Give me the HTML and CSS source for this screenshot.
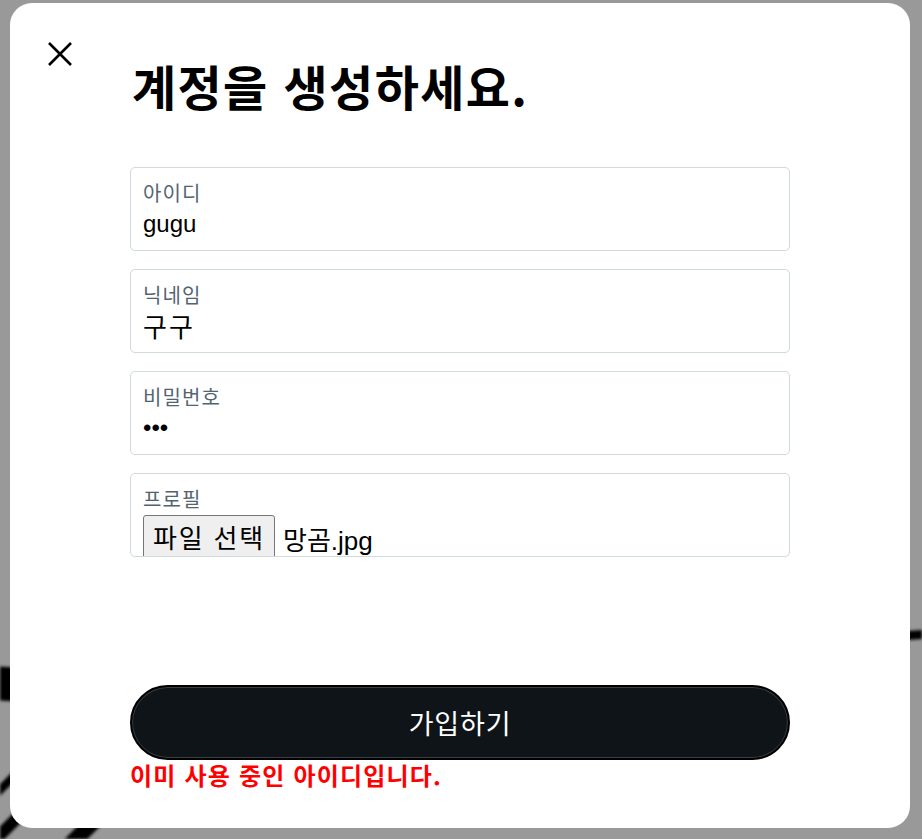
FILE: index.html
```html
<!doctype html>
<html lang="ko">

<head>
  <meta charset="utf-8">
  <title>계정 생성</title>
  <link rel="stylesheet" href="styles.css">
</head>

<body>
  <svg class="backdrop-art" width="922" height="839" viewBox="0 0 922 839">
    <path d="M-10 666 L25 668 L25 702 L-10 700 Z" fill="#000" />
    <path d="M-20 810 L40 750" stroke="#000" stroke-width="8" />
    <path d="M-10 845 L40 795" stroke="#000" stroke-width="12" />
    <path d="M70 845 L95 820" stroke="#000" stroke-width="16" />
    <path d="M900 636 L930 634" stroke="#000" stroke-width="9" />
  </svg>
  <div class="overlay"></div>

  <div class="modal">
    <button class="close" aria-label="닫기">
      <svg width="24" height="24" viewBox="0 0 24 24">
        <path d="M1 1 L23 23 M23 1 L1 23" stroke="#000" stroke-width="2.6" fill="none" />
      </svg>
    </button>

    <div class="content">
      <h1>계정을 생성하세요.</h1>

      <form class="form">
        <label class="field">
          <span class="label">아이디</span>
          <input class="value" type="text" value="gugu">
        </label>
        <label class="field">
          <span class="label">닉네임</span>
          <input class="value value-ko" type="text" value="구구">
        </label>
        <label class="field">
          <span class="label">비밀번호</span>
          <input class="value" type="password" value="abc">
        </label>
        <div class="field">
          <span class="label">프로필</span>
          <div class="file">
            <span class="file-btn">파일 선택</span>
            <span class="file-name">망곰.jpg</span>
          </div>
        </div>

        <button class="submit" type="button">가입하기</button>
        <p class="error">이미 사용 중인 아이디입니다.</p>
      </form>
    </div>
  </div>
</body>

</html>
```

FILE: styles.css
```css
html, body { margin:0; height:100%; }
body { background-color:#fff; font-family:"Liberation Sans","Noto Sans CJK KR",sans-serif; overflow:hidden; position:relative; }

.backdrop-art { position:absolute; left:0; top:0; filter:blur(1.5px); }
.overlay { position:absolute; inset:0; background-color:rgba(0,0,0,0.4); }

.modal { position:relative; box-sizing:border-box; width:900px; height:825px; margin:3px 0 0 10px; background-color:#fff; border-radius:22px; }

.close { position:absolute; left:37px; top:38px; width:26px; height:26px; padding:1px; border:0; background:none; cursor:pointer; }

.content { width:660px; margin-left:120px; padding-top:53px; }

h1 { margin:0 0 53px 2px; font-family:"Noto Sans CJK KR",sans-serif; font-size:48px; font-weight:700; line-height:58px; color:#000; letter-spacing:1.4px; }

.form { display:flex; flex-direction:column; gap:18px; }

.field { display:block; box-sizing:border-box; height:84px; padding:12px 12px 0; border:1px solid #cfd9de; border-radius:5px; overflow:hidden; }

.label { display:block; font-family:"Noto Sans CJK KR",sans-serif; font-size:20px; line-height:26px; letter-spacing:1.1px; color:#536471; }

.value { display:block; width:100%; padding:0; margin:3px 0 0; border:0; outline:0; font-family:"Liberation Sans","Noto Sans CJK KR",sans-serif; font-size:24px; line-height:30px; height:30px; color:#000; background:none; }
.value-ko { font-family:"Noto Sans CJK KR",sans-serif; font-size:26px; letter-spacing:2px; }

.file { display:flex; align-items:center; gap:8px; margin-top:3px; font-size:26px; }
.file-btn { display:inline-block; padding:4px 9px 6px; background-color:#efefef; border:1px solid #767676; border-radius:3px; font-family:"Noto Sans CJK KR",sans-serif; letter-spacing:1.8px; line-height:34px; }
.file-name { font-family:"Liberation Sans","Noto Sans CJK KR",sans-serif; }

.submit { margin-top:110px; height:75px; border:2px solid #000; box-shadow:inset 0 0 0 1px #3a3e42; border-radius:38px; background-color:#0f1419; color:#fff; font-family:"Noto Sans CJK KR",sans-serif; font-size:27px; letter-spacing:0.8px; cursor:pointer; }

.error { margin:-18px 0 0; font-family:"Noto Sans CJK KR",sans-serif; font-size:24px; font-weight:700; line-height:30px; letter-spacing:1.2px; color:#f00; }
```
